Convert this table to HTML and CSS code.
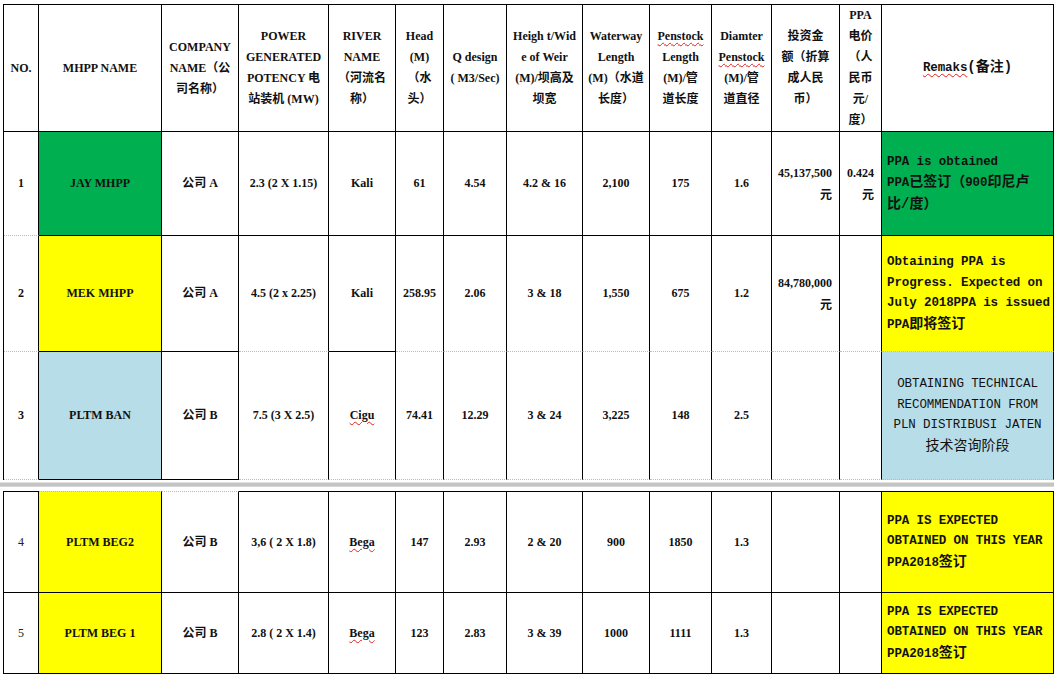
FILE: index.html
```html
<!DOCTYPE html>
<html>
<head>
<meta charset="utf-8">
<link rel="stylesheet" href="styles.css">
</head>
<body>
<table class="grid first">
<colgroup>
<col class="c0"><col class="c1"><col class="c2"><col class="c3"><col class="c4"><col class="c5"><col class="c6"><col class="c7"><col class="c8"><col class="c9"><col class="c10"><col class="c11"><col class="c12"><col class="c13">
</colgroup>
<tr class="rh">
<td>NO.</td>
<td>MHPP NAME</td>
<td>COMPANY<br>NAME（公<br>司名称）</td>
<td>POWER<br>GENERATED<br>POTENCY 电<br>站装机 (MW)</td>
<td>RIVER<br>NAME<br>（河流名<br>称）</td>
<td>Head<br>(M)<br>（水<br>头）</td>
<td>Q design<br>( M3/Sec)</td>
<td>Heigh t/Wid<br>e of Weir<br>(M)/坝高及<br>坝宽</td>
<td>Waterway<br>Length<br>(M)（水道<br>长度）</td>
<td><span class="sp">Penstock</span><br>Length<br>(M)/管<br>道长度</td>
<td>Diamter<br><span class="sp">Penstock</span><br>(M)/管<br>道直径</td>
<td>投资金<br>额（折算<br>成人民<br>币）</td>
<td>PPA<br>电价<br>（人<br>民币<br>元/<br>度）</td>
<td class="mono"><span class="sp">Remaks</span><span class="cj">(备注)</span></td>
</tr>
<tr class="r1">
<td class="dot">1</td>
<td class="green">JAY MHPP</td>
<td>公司 A</td>
<td>2.3 (2 X 1.15)</td>
<td>Kali</td>
<td>61</td>
<td>4.54</td>
<td>4.2 &amp; 16</td>
<td>2,100</td>
<td>175</td>
<td>1.6</td>
<td class="money">45,137,500<br>元</td>
<td class="money">0.424<br>元</td>
<td class="green mono left">PPA is obtained<br>PPA<span class="cj">已签订（</span>900<span class="cj">印尼卢</span><br><span class="cj">比/度）</span></td>
</tr>
<tr class="r2">
<td class="dot">2</td>
<td class="yellow">MEK MHPP</td>
<td>公司 A</td>
<td class="dot">4.5 (2 x 2.25)</td>
<td>Kali</td>
<td class="dot">258.95</td>
<td class="dot">2.06</td>
<td class="dot">3 &amp; 18</td>
<td class="dot">1,550</td>
<td class="dot">675</td>
<td class="dot">1.2</td>
<td class="money dot">84,780,000<br>元</td>
<td class="dot"></td>
<td class="yellow mono left dot">Obtaining PPA is<br>Progress. Expected on<br>July 2018PPA is issued<br>PPA<span class="cj">即将签订</span></td>
</tr>
<tr class="r3">
<td class="dot">3</td>
<td class="blue">PLTM BAN</td>
<td>公司 B</td>
<td class="dot">7.5 (3 X 2.5)</td>
<td class="dot"><span class="sp">Cigu</span></td>
<td class="dot">74.41</td>
<td class="dot">12.29</td>
<td class="dot">3 &amp; 24</td>
<td class="dot">3,225</td>
<td class="dot">148</td>
<td class="dot">2.5</td>
<td class="dot"></td>
<td class="dot"></td>
<td class="blue mono reg dot">OBTAINING TECHNICAL<br>RECOMMENDATION FROM<br>PLN DISTRIBUSI JATEN<br><span class="cj">技术咨询阶段</span></td>
</tr>
</table>
<div class="pagebreak"></div>
<table class="grid second">
<colgroup>
<col class="c0"><col class="c1"><col class="c2"><col class="c3"><col class="c4"><col class="c5"><col class="c6"><col class="c7"><col class="c8"><col class="c9"><col class="c10"><col class="c11"><col class="c12"><col class="c13">
</colgroup>
<tr class="r4">
<td class="thin">4</td>
<td class="yellow dtop">PLTM BEG2</td>
<td class="dtop">公司 B</td>
<td>3,6 ( 2 X 1.8)</td>
<td><span class="sp">Bega</span></td>
<td>147</td>
<td>2.93</td>
<td>2 &amp; 20</td>
<td>900</td>
<td>1850</td>
<td>1.3</td>
<td></td>
<td></td>
<td class="yellow mono left">PPA IS EXPECTED<br>OBTAINED ON THIS YEAR<br>PPA2018<span class="cj">签订</span></td>
</tr>
<tr class="r5">
<td class="thin">5</td>
<td class="yellow">PLTM BEG 1</td>
<td>公司 B</td>
<td>2.8 ( 2 X 1.4)</td>
<td><span class="sp">Bega</span></td>
<td>123</td>
<td>2.83</td>
<td>3 &amp; 39</td>
<td>1000</td>
<td>1111</td>
<td>1.3</td>
<td></td>
<td></td>
<td class="yellow mono left">PPA IS EXPECTED<br>OBTAINED ON THIS YEAR<br>PPA2018<span class="cj">签订</span></td>
</tr>
</table>
</body>
</html>
```
FILE: styles.css
```css
html, body {
  margin: 0;
  background: #ffffff;
}
body {
  padding: 4px 0 0 3px;
  font-family: "Liberation Serif", "Noto Sans CJK SC", serif;
  font-size: 12px;
  font-weight: bold;
  color: #111;
}
.grid {
  border-collapse: separate;
  border-spacing: 0;
  table-layout: fixed;
  width: 1051px;
  border-left: 1px solid #000;
}
.first {
  border-top: 1px solid #000;
}
.grid td {
  box-sizing: border-box;
  border-right: 1px solid #000;
  border-bottom: 1px solid #000;
  padding: 0 4px;
  text-align: center;
  vertical-align: middle;
  line-height: 21px;
  white-space: nowrap;
  overflow: hidden;
}
.c0 { width: 35px; }
.c1 { width: 123px; }
.c2 { width: 77px; }
.c3 { width: 90px; }
.c4 { width: 67px; }
.c5 { width: 48px; }
.c6 { width: 63px; }
.c7 { width: 76px; }
.c8 { width: 67px; }
.c9 { width: 62px; }
.c10 { width: 60px; }
.c11 { width: 68px; }
.c12 { width: 42px; }
.c13 { width: 172px; }

.rh { height: 126px; }
.r1 { height: 104px; }
.r2 { height: 116px; }
.r3 { height: 128px; }
.r4 { height: 102px; }
.r5 { height: 81px; }

.second .r4 td {
  border-top: 1px solid #000;
}
.second .r4 td.dtop {
  border-top: 1px dotted #b8b8b8;
}
.grid td.dot {
  border-bottom: 1px dotted #bcbcbc;
}

.green { background: #00b050; }
.yellow { background: #ffff00; }
.blue { background: #b7dde8; }

.grid td.money {
  text-align: right;
  padding-right: 7px;
  line-height: 22px;
}
.grid td.mono {
  font-family: "Liberation Mono", "Noto Sans CJK SC", monospace;
  font-size: 12.5px;
  line-height: 20.5px;
  letter-spacing: -0.1px;
}
.cj {
  font-size: 14px;
  letter-spacing: 0;
}
.grid td.left {
  text-align: left;
  padding-left: 5px;
  padding-right: 0;
}
.reg {
  font-weight: normal;
}
.thin {
  font-weight: normal;
  color: #222;
}
.sp {
  text-decoration: underline wavy #e02020;
  text-decoration-thickness: 1px;
  text-underline-offset: 2px;
}
.pagebreak {
  margin: 2px 0 4px -3px;
  height: 3px;
  background: #c4c4c4;
  border-top: 1px solid #e2e2e2;
  border-bottom: 1px solid #d6d6d6;
}
```
